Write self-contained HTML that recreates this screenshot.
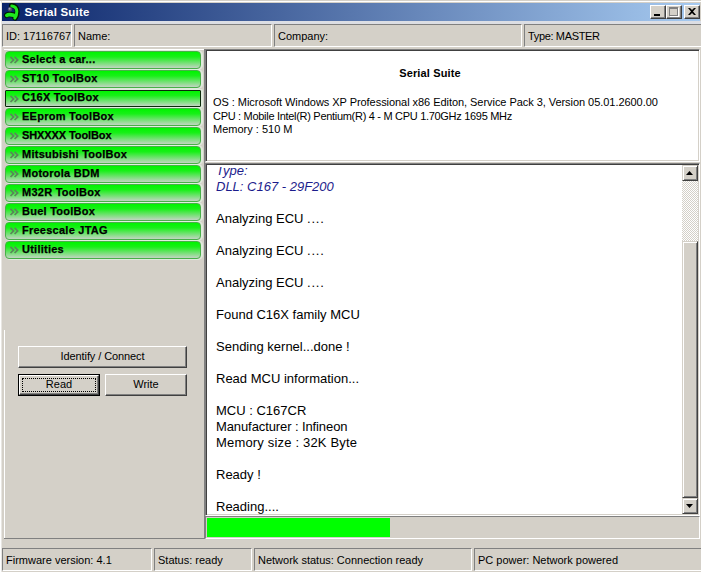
<!DOCTYPE html>
<html><head><meta charset="utf-8">
<style>
*{box-sizing:border-box;margin:0;padding:0}
html,body{width:701px;height:572px;overflow:hidden;background:#D4D0C8}
body{position:relative;font-family:"Liberation Sans",sans-serif;font-size:11px;color:#000}
.abs{position:absolute}
#title{left:2px;top:3px;width:698px;height:18px;background:linear-gradient(to right,#0A246A 0%,#A6CAF0 100%)}
#title .t{left:22.5px;top:1.5px;color:#fff;font-weight:bold;font-size:11.5px;line-height:14px;letter-spacing:0.2px}
.cb{top:2px;width:16px;height:14px;background:#D4D0C8;border-top:1px solid #fff;border-left:1px solid #fff;border-right:1px solid #404040;border-bottom:1px solid #404040;box-shadow:inset -1px -1px 0 #808080}
.field{top:24px;height:23px;border-top:1px solid #808080;border-left:1px solid #808080;border-bottom:1px solid #fff;border-right:1px solid #fff;padding-left:3px;line-height:23px;font-size:11px;white-space:nowrap;overflow:hidden}
.sunk{border-top:1px solid #808080;border-left:1px solid #808080;border-bottom:1px solid #fff;border-right:1px solid #fff}
.sunk2{border-top:1px solid #808080;border-left:1px solid #808080;border-bottom:1px solid #fff;border-right:1px solid #fff;box-shadow:inset 1px 1px 0 #404040, inset -1px -1px 0 #D4D0C8}
.gb{left:5px;width:196px;height:18px;border:1px solid #48b048;border-radius:4px;background:linear-gradient(to bottom,#00f400 0%,#18f018 30%,#c2d4c2 100%);font-weight:bold;font-size:11px;line-height:14px;padding-left:16px;box-shadow:1px 0 0 1px rgba(225,240,225,0.8);letter-spacing:0.25px;-webkit-text-stroke:0.25px #000;white-space:nowrap}
.gb svg{position:absolute;left:3px;top:4px}
.gb.sel{border:1px solid #0a2a0a;border-radius:1px;margin-top:1px;height:17px;line-height:13px}
.btn{height:22px;background:#D4D0C8;border-top:1px solid #fff;border-left:1px solid #fff;border-right:1px solid #404040;border-bottom:1px solid #404040;box-shadow:inset -1px -1px 0 #808080;text-align:center;line-height:19px;font-size:11px}
.log{font-size:13px;line-height:16px;white-space:nowrap}
.stat{top:548px;height:23px;border-top:1px solid #808080;border-left:1px solid #808080;border-bottom:1px solid #fff;border-right:1px solid #fff;padding-left:3px;line-height:22px;font-size:11px;white-space:nowrap}
.sbtn{width:16px;height:16px;background:#D4D0C8;border-top:1px solid #D4D0C8;border-left:1px solid #D4D0C8;border-right:1px solid #404040;border-bottom:1px solid #404040;box-shadow:inset 1px 1px 0 #fff, inset -1px -1px 0 #808080}
</style></head><body>
<div class="abs" style="left:0;top:1px;width:701px;height:1px;background:#fff"></div>
<div class="abs" style="left:0;top:1px;width:1px;height:571px;background:#fff"></div>
<div class="abs" style="left:1px;top:1px;width:1px;height:571px;background:#E8E6E2"></div>
<div id="title" class="abs">
  <svg class="abs" style="left:0;top:0" width="18" height="18" viewBox="0 0 18 18">
    <path d="M9.5 2.6 Q15 3.2 15.2 8.5 Q15.2 12.8 13 15.2" fill="none" stroke="#021802" stroke-width="5" stroke-linecap="round"/>
    <path d="M4.8 12.2 Q6.5 10.8 12 12" fill="none" stroke="#021802" stroke-width="5.6" stroke-linecap="round"/>
    <path d="M9.8 3 Q14.6 3.6 14.8 8.5 Q14.8 12.6 12.8 15" fill="none" stroke="#1ee81e" stroke-width="3" stroke-linecap="round"/>
    <path d="M4.8 12.4 Q6.5 11 11.8 12.2" fill="none" stroke="#1ee81e" stroke-width="3.6" stroke-linecap="round"/>
    <circle cx="8" cy="6.3" r="2.2" fill="#505068"/>
    <circle cx="7.6" cy="5.8" r="1" fill="#a0a0b8"/>
  </svg>
  <div class="abs t">Serial Suite</div>
  <div class="abs cb" style="left:648px"><div class="abs" style="left:3px;top:8px;width:6px;height:2px;background:#000"></div></div>
  <div class="abs cb" style="left:664px"><div class="abs" style="left:2px;top:1px;width:9px;height:9px;border:1px solid #808080;border-top-width:2px;box-shadow:1px 1px 0 #fff"></div></div>
  <div class="abs cb" style="left:682px">
    <svg class="abs" style="left:3px;top:2px" width="8" height="7" viewBox="0 0 8 7"><path d="M0 0 L2 0 L4 2 L6 0 L8 0 L5 3.5 L8 7 L6 7 L4 5 L2 7 L0 7 L3 3.5 Z" fill="#000"/></svg>
  </div>
</div>
<div class="abs" style="left:2px;top:21px;width:699px;height:3px;background:#DCDEE4"></div>

<div class="abs field" style="left:2px;width:70px">ID: 17116767</div>
<div class="abs field" style="left:74px;width:198px">Name:</div>
<div class="abs field" style="left:274px;width:248px">Company:</div>
<div class="abs field" style="left:524px;width:177px;border-right:none;letter-spacing:-0.35px">Type: MASTER</div>

<!-- left panel -->
<div class="abs" style="left:4px;top:330px;width:1px;height:208px;background:#fff"></div>
<div class="abs" style="left:4px;top:538px;width:200px;height:1px;background:#808080"></div>
<div class="abs" style="left:4px;top:49px;width:200px;height:1px;background:#fff"></div>
<div class="abs" style="left:204px;top:49px;width:1px;height:490px;background:#808080"></div>

<div class="abs gb" style="top:51px"><svg width="11" height="8" viewBox="0 0 11 8"><path d="M1.5 0.8 L4.6 3.9 L1.5 7 M5.6 0.8 L8.7 3.9 L5.6 7" fill="none" stroke="#5a865a" stroke-width="1.7"/></svg>Select a car...</div>
<div class="abs gb" style="top:70px"><svg width="11" height="8" viewBox="0 0 11 8"><path d="M1.5 0.8 L4.6 3.9 L1.5 7 M5.6 0.8 L8.7 3.9 L5.6 7" fill="none" stroke="#5a865a" stroke-width="1.7"/></svg>ST10 ToolBox</div>
<div class="abs gb sel" style="top:89px"><svg width="11" height="8" viewBox="0 0 11 8"><path d="M1.5 0.8 L4.6 3.9 L1.5 7 M5.6 0.8 L8.7 3.9 L5.6 7" fill="none" stroke="#5a865a" stroke-width="1.7"/></svg>C16X ToolBox</div>
<div class="abs gb" style="top:108px"><svg width="11" height="8" viewBox="0 0 11 8"><path d="M1.5 0.8 L4.6 3.9 L1.5 7 M5.6 0.8 L8.7 3.9 L5.6 7" fill="none" stroke="#5a865a" stroke-width="1.7"/></svg>EEprom ToolBox</div>
<div class="abs gb" style="top:127px"><svg width="11" height="8" viewBox="0 0 11 8"><path d="M1.5 0.8 L4.6 3.9 L1.5 7 M5.6 0.8 L8.7 3.9 L5.6 7" fill="none" stroke="#5a865a" stroke-width="1.7"/></svg><span style="letter-spacing:-0.1px">SHXXXX ToolBox</span></div>
<div class="abs gb" style="top:146px"><svg width="11" height="8" viewBox="0 0 11 8"><path d="M1.5 0.8 L4.6 3.9 L1.5 7 M5.6 0.8 L8.7 3.9 L5.6 7" fill="none" stroke="#5a865a" stroke-width="1.7"/></svg>Mitsubishi ToolBox</div>
<div class="abs gb" style="top:165px"><svg width="11" height="8" viewBox="0 0 11 8"><path d="M1.5 0.8 L4.6 3.9 L1.5 7 M5.6 0.8 L8.7 3.9 L5.6 7" fill="none" stroke="#5a865a" stroke-width="1.7"/></svg>Motorola BDM</div>
<div class="abs gb" style="top:184px"><svg width="11" height="8" viewBox="0 0 11 8"><path d="M1.5 0.8 L4.6 3.9 L1.5 7 M5.6 0.8 L8.7 3.9 L5.6 7" fill="none" stroke="#5a865a" stroke-width="1.7"/></svg>M32R ToolBox</div>
<div class="abs gb" style="top:203px"><svg width="11" height="8" viewBox="0 0 11 8"><path d="M1.5 0.8 L4.6 3.9 L1.5 7 M5.6 0.8 L8.7 3.9 L5.6 7" fill="none" stroke="#5a865a" stroke-width="1.7"/></svg>Buel ToolBox</div>
<div class="abs gb" style="top:222px"><svg width="11" height="8" viewBox="0 0 11 8"><path d="M1.5 0.8 L4.6 3.9 L1.5 7 M5.6 0.8 L8.7 3.9 L5.6 7" fill="none" stroke="#5a865a" stroke-width="1.7"/></svg>Freescale JTAG</div>
<div class="abs gb" style="top:241px"><svg width="11" height="8" viewBox="0 0 11 8"><path d="M1.5 0.8 L4.6 3.9 L1.5 7 M5.6 0.8 L8.7 3.9 L5.6 7" fill="none" stroke="#5a865a" stroke-width="1.7"/></svg>Utilities</div>

<div class="abs btn" style="left:18px;top:346px;width:169px;letter-spacing:-0.1px">Identify / Connect</div>
<div class="abs" style="left:18px;top:374px;width:82px;height:22px;border:1px solid #000;background:#D4D0C8">
  <div class="abs" style="left:0;top:0;width:80px;height:20px;border-top:1px solid #fff;border-left:1px solid #fff;border-right:1px solid #404040;border-bottom:1px solid #404040;box-shadow:inset -1px -1px 0 #808080"></div>
  <div class="abs" style="left:3px;top:3px;width:74px;height:14px;border:1px dotted #000"></div>
  <div class="abs" style="left:0;top:0;width:80px;text-align:center;line-height:19px">Read</div>
</div>
<div class="abs btn" style="left:105px;top:374px;width:82px">Write</div>

<!-- info panel -->
<div class="abs sunk2" style="left:205px;top:49px;width:495px;height:113px;background:#fff"></div>
<div class="abs" style="left:206px;top:67px;width:448px;text-align:center;font-weight:bold;font-size:11px;letter-spacing:0.15px">Serial Suite</div>
<div class="abs" style="left:213px;top:96px;line-height:13.5px;font-size:11px;white-space:nowrap"><span style="letter-spacing:-0.05px">OS : Microsoft Windows XP Professional x86 Editon, Service Pack 3, Version 05.01.2600.00</span><br><span style="letter-spacing:-0.3px">CPU : Mobile Intel(R) Pentium(R) 4 - M CPU 1.70GHz 1695 MHz</span><br>Memory : 510 M</div>

<!-- log panel -->
<div class="abs sunk2" style="left:205px;top:163px;width:495px;height:353px;background:#fff"></div>
<div class="abs" style="left:207px;top:167px;width:475px;height:347px;overflow:hidden">
  <div class="abs log" style="left:9px;top:-4px;color:#1c1c8c;font-style:italic">Type:<br>DLL: C167 - 29F200</div>
  <div class="abs log" style="left:9px;top:44px">Analyzing ECU <span style="letter-spacing:0.8px">....</span><br><br>Analyzing ECU <span style="letter-spacing:0.8px">....</span><br><br>Analyzing ECU <span style="letter-spacing:0.8px">....</span><br><br>Found C16X family MCU<br><br>Sending kernel...done !<br><br>Read MCU information...<br><br>MCU : C167CR<br><span style="letter-spacing:-0.1px">Manufacturer : Infineon</span><br><span style="letter-spacing:0.18px">Memory size : 32K Byte</span><br><br>Ready !<br><br>Reading....</div>
</div>
<!-- scrollbar -->
<div class="abs" style="left:682px;top:181px;width:16px;height:60px;background-color:#fff;background-image:linear-gradient(45deg,#D4D0C8 25%,transparent 25%,transparent 75%,#D4D0C8 75%),linear-gradient(45deg,#D4D0C8 25%,transparent 25%,transparent 75%,#D4D0C8 75%);background-size:2px 2px;background-position:0 0,1px 1px"></div>
<div class="abs sbtn" style="left:682px;top:165px"><svg class="abs" style="left:3px;top:5px" width="7" height="4" viewBox="0 0 7 4"><path d="M3.5 0 L7 4 L0 4 Z" fill="#000"/></svg></div>
<div class="abs sbtn" style="left:682px;top:241px;height:257px"></div>
<div class="abs sbtn" style="left:682px;top:498px"><svg class="abs" style="left:3px;top:5px" width="7" height="4" viewBox="0 0 7 4"><path d="M0 0 L7 0 L3.5 4 Z" fill="#000"/></svg></div>

<!-- progress -->
<div class="abs sunk" style="left:205px;top:516px;width:495px;height:23px"></div>
<div class="abs" style="left:207px;top:518px;width:183px;height:19px;background:#00ff00"></div>

<!-- status bar -->
<div class="abs stat" style="left:2px;width:150px">Firmware version: 4.1</div>
<div class="abs stat" style="left:154px;width:98px">Status: ready</div>
<div class="abs stat" style="left:254px;width:218px">Network status: Connection ready</div>
<div class="abs stat" style="left:474px;width:227px;border-right:none">PC power: Network powered</div>
</body></html>
